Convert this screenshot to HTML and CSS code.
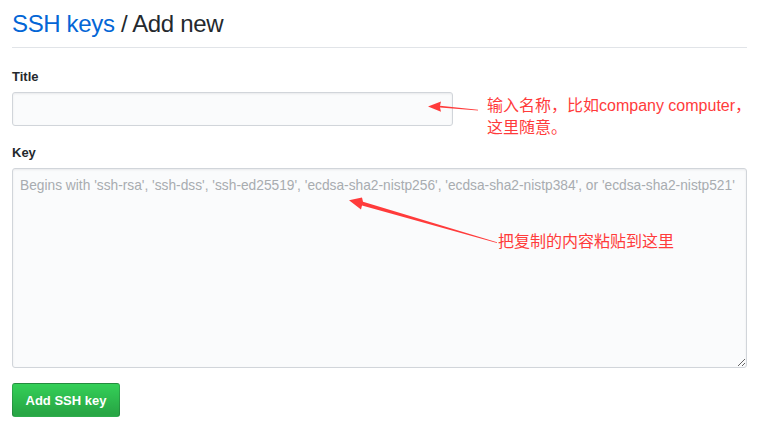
FILE: index.html
```html
<html>
    <head>
        <title>Add new SSH key</title>
        <link rel="stylesheet" href="styles.css">
    </head>
    <body>
        <div class='page'>
            <h2 class='subhead'><a href='#'>SSH keys</a> / Add new</h2>
            <form class='key-form'>
                <div class='form-group'>
                    <label for='title'>Title</label>
                    <input id='title' class='title-input' type='text'>
                </div>
                <div class='form-group'>
                    <label for='key'>Key</label>
                    <textarea id='key' placeholder="Begins with 'ssh-rsa', 'ssh-dss', 'ssh-ed25519', 'ecdsa-sha2-nistp256', 'ecdsa-sha2-nistp384', or 'ecdsa-sha2-nistp521'"></textarea>
                </div>
                <button type='submit' class='btn-primary'>Add SSH key</button>
            </form>

            <!-- annotations drawn over the screenshot -->
            <svg class='arrows' width='766' height='425' viewBox='0 0 766 425'>
                <polygon fill='#ff3b3b' points='478,110.6 440,107.6 441,111.8 428,106.5 441,101.6 440,105.8 478,109.8'/>
                <polygon fill='#ff3b3b' points='497,243 362,205.5 361,209.5 349,200.2 362,197.5 363,201.7 497,242.2'/>
            </svg>
            <div class='note note-title'>输入名称，比如company computer，<br>这里随意。</div>
            <div class='note note-key'>把复制的内容粘贴到这里</div>
        </div>
    </body>
</html>
```

FILE: styles.css
```css
body{
    margin: 0;
    font-family: "Liberation Sans", Arial, "Noto Sans CJK SC", sans-serif;
    color: #24292e;
    background-color: #fff;
}

.page{
    position: relative;
    width: 735px;
    padding: 0 19px 0 12px;
    height: 425px;
}

.subhead{
    margin: 0;
    padding: 9px 0 9px 0;
    font-size: 24px;
    font-weight: 400;
    line-height: 29px;
    letter-spacing: -0.35px;
    border-bottom: 1px solid #e1e4e8;
}
.subhead a{
    color: #0366d6;
    text-decoration: none;
}

.key-form{
    display: grid;
    padding-top: 21px;
}

.form-group{
    display: grid;
    grid-gap: 7px;
    margin-bottom: 19px;
    justify-items: start;
}
.form-group label{
    font-size: 13px;
    font-weight: 700;
    line-height: 16px;
}
.form-group + .btn-primary{
    margin-top: -4px;
}

.title-input,
.form-group textarea{
    box-sizing: border-box;
    background-color: #fafbfc;
    border: 1px solid #d1d5da;
    border-radius: 3px;
    box-shadow: inset 0 1px 2px rgba(27,31,35,0.075);
    outline: none;
    font-family: "Liberation Sans", Arial, sans-serif;
    font-size: 13.75px;
}
.title-input{
    width: 441px;
    height: 34px;
    padding: 6px 8px;
}
.form-group textarea{
    width: 735px;
    height: 200px;
    padding: 7px 7px;
    line-height: 20px;
    resize: vertical;
}
.form-group textarea::placeholder{
    color: #a8acb0;
}

.btn-primary{
    justify-self: start;
    width: 108px;
    height: 34px;
    padding: 0;
    font-family: "Liberation Sans", Arial, sans-serif;
    font-size: 13px;
    font-weight: 700;
    color: #fff;
    border: 1px solid rgba(27,31,35,0.2);
    border-radius: 3px;
    background-image: linear-gradient(-180deg, #34d058 0%, #28a745 90%);
}

.arrows{
    position: absolute;
    top: 0;
    left: 0;
    pointer-events: none;
}

.note{
    position: absolute;
    color: #ff3b3b;
    font-family: "Liberation Sans", Arial, "Noto Sans CJK SC", sans-serif;
    font-size: 16px;
    line-height: 22px;
    white-space: nowrap;
}
.note-title{
    left: 487px;
    top: 95px;
}
.note-key{
    left: 498px;
    top: 231px;
}
```
